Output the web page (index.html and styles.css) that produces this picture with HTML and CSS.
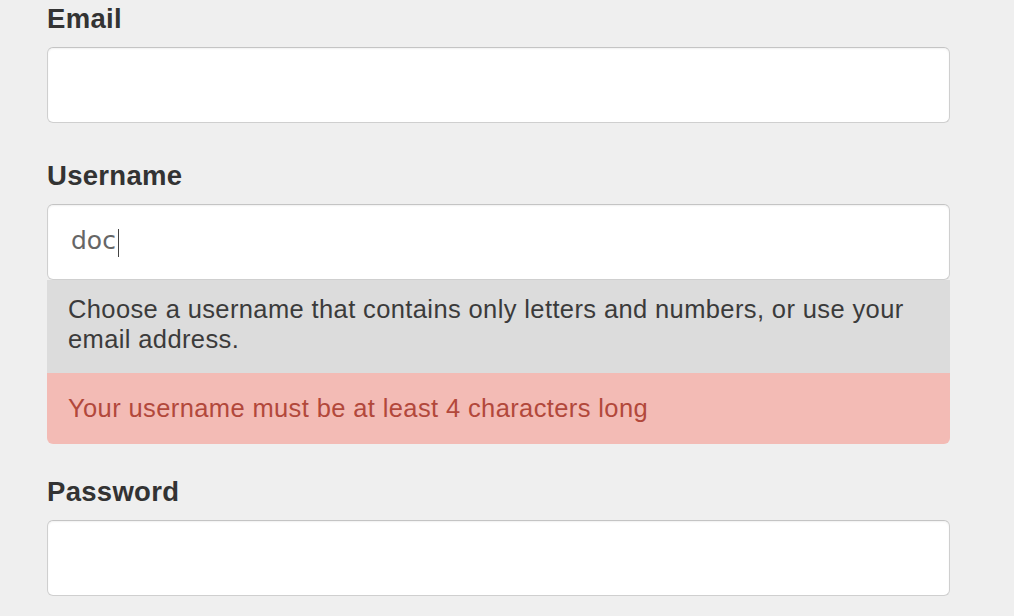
FILE: index.html
```html
<!DOCTYPE html>
<html>
<head>
<meta charset="utf-8">
<link rel="stylesheet" href="styles.css">
</head>
<body>
<form class="form">
  <div class="field">
    <label class="label">Email</label>
    <div class="input"></div>
  </div>
  <div class="field field-user">
    <label class="label">Username</label>
    <div class="input-wrap">
      <div class="help">
        <div class="help-text">Choose a username that contains only letters and numbers, or use your email address.</div>
        <div class="error">Your username must be at least 4 characters long</div>
      </div>
      <div class="input input-filled"><span class="value">doc</span><span class="caret"></span></div>
    </div>
  </div>
  <div class="field field-pass">
    <label class="label">Password</label>
    <div class="input"></div>
  </div>
</form>
</body>
</html>
```
FILE: styles.css
```css
html, body {
  margin: 0;
  padding: 0;
  background: #efefef;
}
body {
  font-family: "Liberation Sans", Arial, sans-serif;
  color: #333;
}
.form {
  padding: 1px 0 0 47px;
  width: 903px;
}
.field {
  display: flex;
  flex-direction: column;
}
.field-user {
  margin-top: 35px;
}
.field-pass {
  margin-top: 30px;
}
.label {
  display: block;
  font-size: 27.5px;
  font-weight: bold;
  line-height: 36px;
  letter-spacing: 0.3px;
  color: #333;
  margin-bottom: 10px;
}
.input {
  box-sizing: border-box;
  height: 76px;
  background: #fff;
  border: 1px solid #cfcfcf;
  border-top-color: #c4c4c4;
  border-radius: 6px;
  box-shadow: inset 0 1px 2px rgba(0,0,0,0.06);
}
.input-wrap {
  display: flex;
  flex-direction: column-reverse;
}
.input-filled {
  display: flex;
  align-items: center;
  padding-left: 23px;
  position: relative;
  z-index: 1;
}
.value {
  font-family: "DejaVu Sans", Verdana, sans-serif;
  font-size: 25px;
  color: #666;
  line-height: 30px;
  margin-top: -2px;
}
.caret {
  width: 1.5px;
  height: 28px;
  background: #444;
  margin-left: 2px;
  margin-top: 2px;
}
.help {
  font-size: 25.5px;
  line-height: 30px;
  letter-spacing: 0.38px;
}
.help-text {
  background: #dcdcdc;
  color: #3b3b3b;
  padding: 14px 30px 19px 21px;
}
.error {
  background: #f3bbb5;
  color: #b2483b;
  padding: 20px 21px 21px 21px;
  border-radius: 0 0 6px 6px;
}
```
